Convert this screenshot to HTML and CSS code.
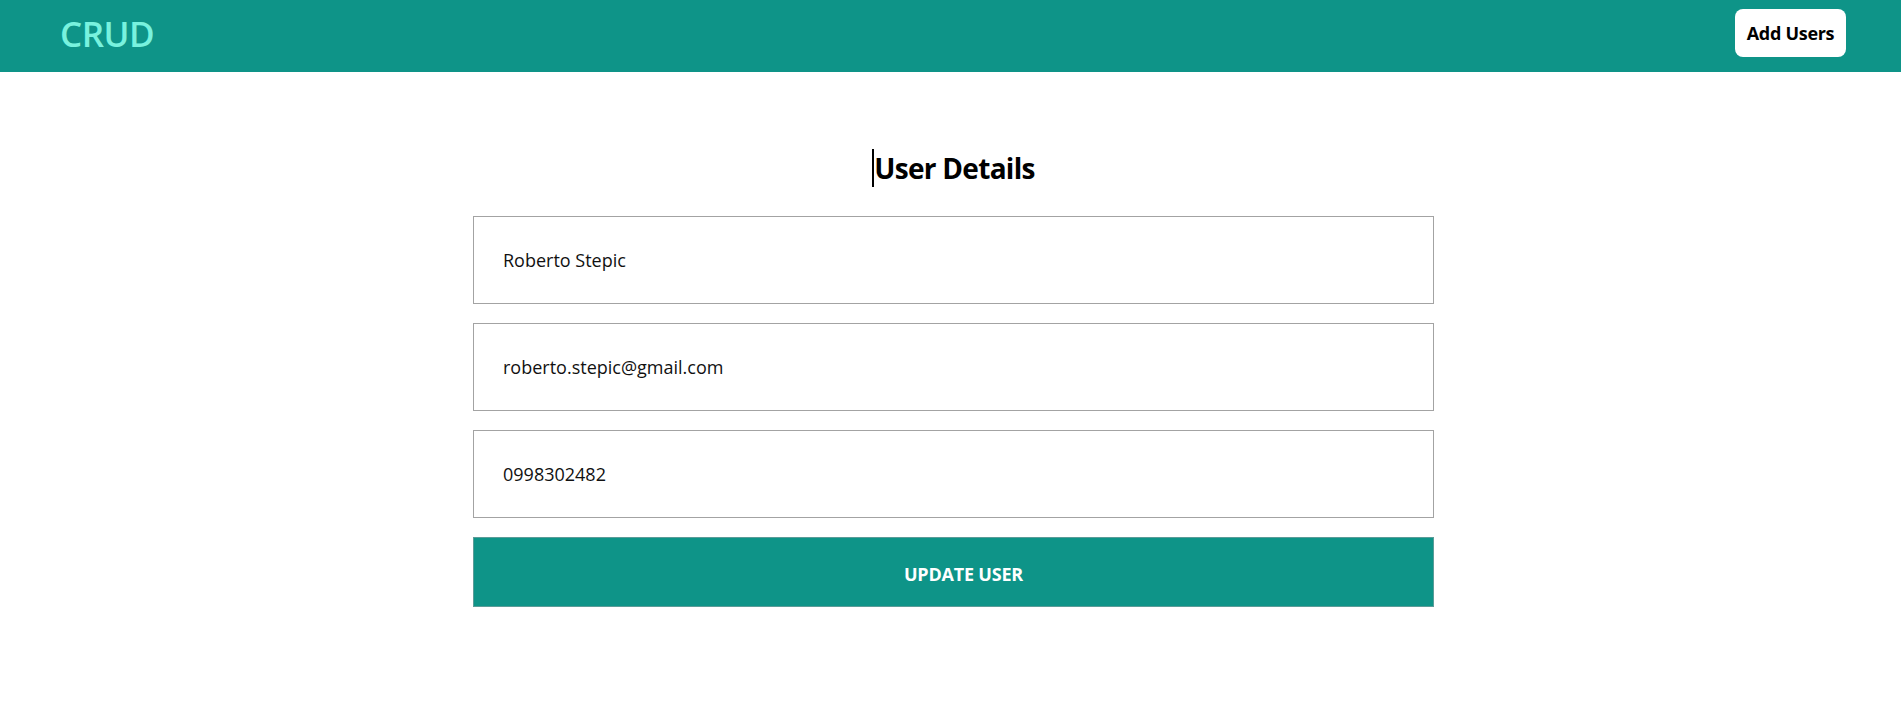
FILE: index.html
```html
<!DOCTYPE html>
<html lang="en">
<head>
<meta charset="utf-8">
<title>CRUD</title>
<link rel="stylesheet" href="styles.css">
</head>
<body>
<header class="topbar">
  <div class="brand">CRUD</div>
  <button class="add-btn" type="button">Add Users</button>
</header>
<main class="page">
  <div class="title-row"><h1 class="title">User Details</h1></div>
  <form class="form">
    <input class="field" type="text" value="Roberto Stepic">
    <input class="field" type="email" value="roberto.stepic@gmail.com">
    <input class="field" type="text" value="0998302482">
    <button class="submit" type="button">UPDATE USER</button>
  </form>
</main>
</body>
</html>
```

FILE: styles.css
```css
* { box-sizing: border-box; }
html, body { margin: 0; padding: 0; background: #fff; }
body {
  font-family: "Open Sans", "Noto Sans", "Liberation Sans", sans-serif;
  color: #000;
}
.topbar {
  height: 72px;
  background: #0e9488;
  display: flex;
  align-items: center;
  justify-content: space-between;
  padding: 0 55px 0 60px;
}
.brand {
  color: #78f2de;
  font-size: 35px;
  font-weight: 600;
  line-height: 40px;
  letter-spacing: -0.5px;
  margin-top: -5px;
}
.add-btn {
  width: 111px;
  height: 48px;
  margin-top: -6px;
  background: #fff;
  border: none;
  border-radius: 8px;
  font-family: inherit;
  font-size: 18px;
  font-weight: 700;
  color: #000;
  padding: 0;
  letter-spacing: -0.3px;
}
.page {
  padding: 77px 0 0 6px;
  display: flex;
  flex-direction: column;
  align-items: center;
}
.title-row {
  display: flex;
  justify-content: center;
}
.title {
  margin: 0;
  font-size: 28px;
  font-weight: 700;
  line-height: 38px;
  border-left: 2px solid #000;
  letter-spacing: -0.7px;
}
.form {
  width: 961px;
  margin-top: 29px;
  display: flex;
  flex-direction: column;
  gap: 19px;
}
.field {
  height: 88px;
  width: 100%;
  border: 1px solid #a3a3a3;
  border-radius: 0;
  padding: 0 29px;
  font-family: inherit;
  font-size: 18px;
  color: #111;
  background: #fff;
  outline: none;
}
.submit {
  height: 70px;
  width: 100%;
  background: #0e9488;
  border: 1px solid #5b9c98;
  color: #fff;
  font-family: inherit;
  font-size: 18px;
  font-weight: 700;
  letter-spacing: -0.2px;
  padding: 3px 0 0 20px;
}
```
